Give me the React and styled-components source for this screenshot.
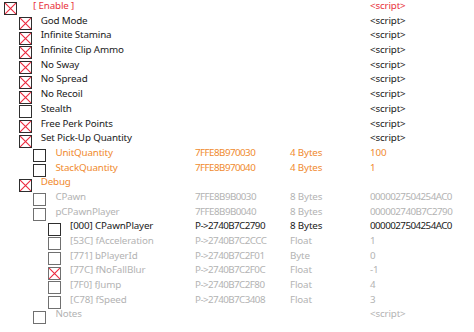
import React from 'react';
import styled, { createGlobalStyle } from 'styled-components';

const GlobalStyle = createGlobalStyle`
  html, body {
    margin: 0;
    padding: 0;
    background: #ffffff;
  }
  body {
    font-family: 'Noto Sans', 'Open Sans', sans-serif;
    font-size: 9.8px;
  }
`;

const COLORS = {
  black: '#1a1a1a',
  red: '#e8323c',
  orange: '#f08a2e',
  gray: '#b3b3b3',
};

const List = styled.div`
  width: 474px;
  height: 332px;
  overflow: hidden;
  background: #fff;
`;

const Row = styled.div`
  display: grid;
  grid-template-columns: 195px 95px 80px 1fr;
  height: 14.7px;
  align-items: start;
  color: ${(p) => COLORS[p.$tone]};
  white-space: nowrap;
`;

const Desc = styled.div`
  display: flex;
  align-items: flex-start;
  padding-left: ${(p) => 4 + p.$level * 14.7}px;
`;

const Box = styled.span`
  flex: none;
  width: 13px;
  height: 13px;
  margin-top: 2.4px;
  box-sizing: border-box;
  border: 1px solid ${(p) => (p.$dim ? '#707070' : '#2e2e2e')};
  background: #fff;
  display: flex;
`;

const Label = styled.span`
  line-height: 12.8px;
  letter-spacing: -0.15px;
  margin-left: ${(p) => (p.$wide ? 16 : 9)}px;
`;

const Cell = styled.span`
  line-height: 12.8px;
  letter-spacing: ${(p) => (p.$hex ? '-0.55px' : '-0.15px')};
`;

const Check = ({ checked, dim }) => (
  <Box $dim={dim}>
    {checked && (
      <svg width="11" height="11" viewBox="0 0 11 11">
        <path d="M0 0 L11 11 M11 0 L0 11" stroke="#ec2a3e" strokeWidth="1.1" fill="none" />
      </svg>
    )}
  </Box>
);

const rows = [
  { level: 0, checked: true, text: '[ Enable ]', tone: 'red', value: '<script>', wide: true },
  { level: 1, checked: true, text: 'God Mode', tone: 'black', value: '<script>' },
  { level: 1, checked: true, text: 'Infinite Stamina', tone: 'black', value: '<script>' },
  { level: 1, checked: true, text: 'Infinite Clip Ammo', tone: 'black', value: '<script>' },
  { level: 1, checked: true, text: 'No Sway', tone: 'black', value: '<script>' },
  { level: 1, checked: true, text: 'No Spread', tone: 'black', value: '<script>' },
  { level: 1, checked: true, text: 'No Recoil', tone: 'black', value: '<script>' },
  { level: 1, checked: false, text: 'Stealth', tone: 'black', value: '<script>' },
  { level: 1, checked: true, text: 'Free Perk Points', tone: 'black', value: '<script>' },
  { level: 1, checked: true, text: 'Set Pick-Up Quantity', tone: 'black', value: '<script>' },
  { level: 2, text: 'UnitQuantity', tone: 'orange', address: '7FFE8B970030', type: '4 Bytes', value: '100' },
  { level: 2, text: 'StackQuantity', tone: 'orange', address: '7FFE8B970040', type: '4 Bytes', value: '1' },
  { level: 1, checked: true, text: 'Debug', tone: 'orange' },
  { level: 2, text: 'CPawn', tone: 'gray', address: '7FFE8B9B0030', type: '8 Bytes', value: '0000027504254AC0' },
  { level: 2, text: 'pCPawnPlayer', tone: 'gray', address: '7FFE8B9B0040', type: '8 Bytes', value: '000002740B7C2790' },
  { level: 3, text: '[000] CPawnPlayer', tone: 'black', address: 'P->2740B7C2790', type: '8 Bytes', value: '0000027504254AC0' },
  { level: 3, text: '[53C] fAcceleration', tone: 'gray', address: 'P->2740B7C2CCC', type: 'Float', value: '1' },
  { level: 3, text: '[771] bPlayerId', tone: 'gray', address: 'P->2740B7C2F01', type: 'Byte', value: '0' },
  { level: 3, checked: true, text: '[77C] fNoFallBlur', tone: 'gray', address: 'P->2740B7C2F0C', type: 'Float', value: '-1' },
  { level: 3, text: '[7F0] fJump', tone: 'gray', address: 'P->2740B7C2F80', type: 'Float', value: '4' },
  { level: 3, text: '[C78] fSpeed', tone: 'gray', address: 'P->2740B7C3408', type: 'Float', value: '3' },
  { level: 2, text: 'Notes', tone: 'gray', value: '<script>' },
];

const App = () => (
  <>
    <GlobalStyle />
    <List>
      {rows.map((r, i) => (
        <Row key={i} $tone={r.tone}>
          <Desc $level={r.level}>
            <Check checked={r.checked} dim={r.tone === 'gray'} />
            <Label $wide={r.wide}>{r.text}</Label>
          </Desc>
          <Cell $hex>{r.address}</Cell>
          <Cell>{r.type}</Cell>
          <Cell $hex={r.value && r.value.length > 8}>{r.value}</Cell>
        </Row>
      ))}
    </List>
  </>
);

export default App;
